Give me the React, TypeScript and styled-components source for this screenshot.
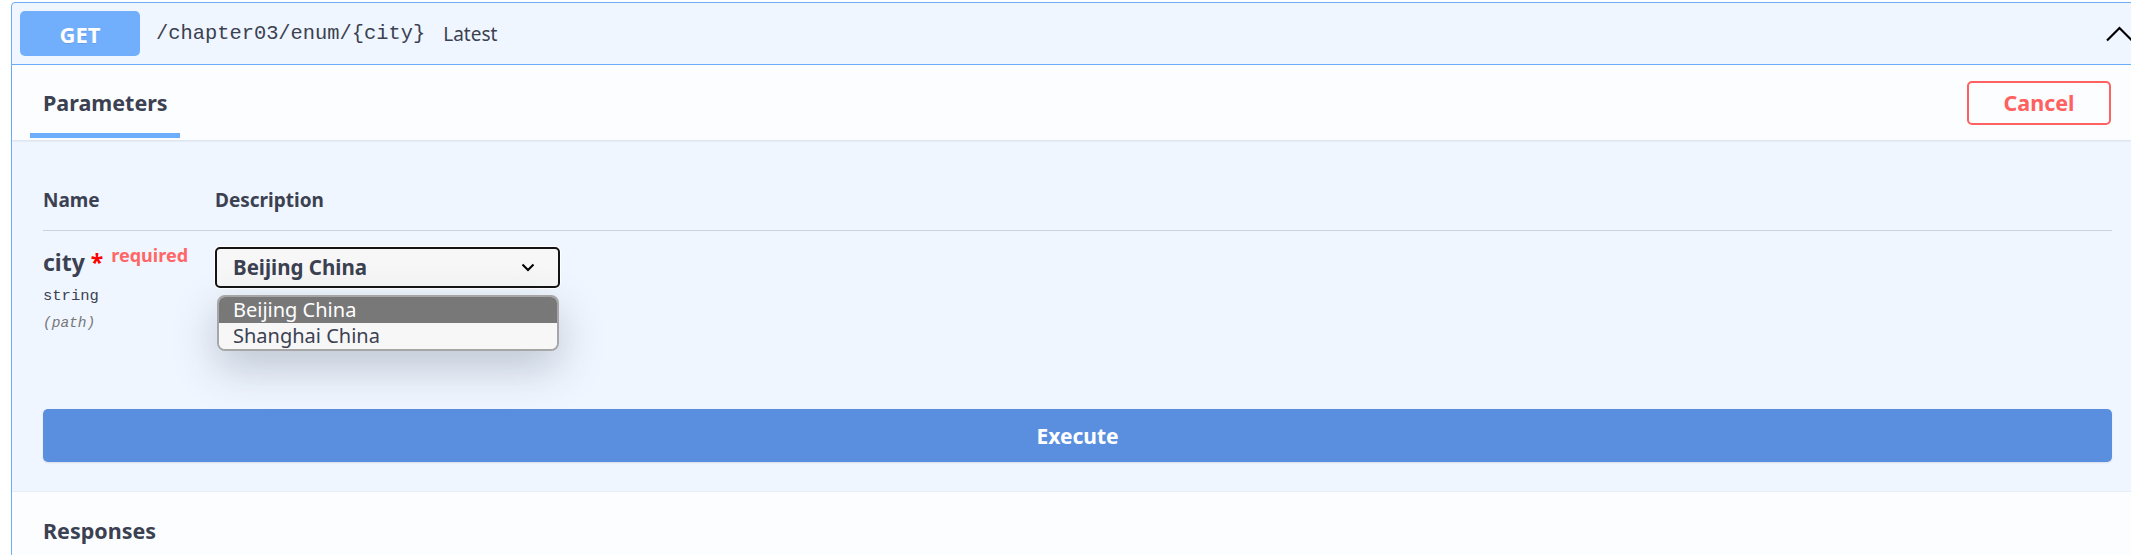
import styled, { createGlobalStyle } from 'styled-components'

const GlobalStyle = createGlobalStyle`
  body {
    margin: 0;
    overflow: hidden;
    background: #ffffff;
    font-family: "Noto Sans", "Open Sans", sans-serif;
    color: #3b4151;
  }
`;

const Page = styled.div`
  padding: 2px 0 0 11px;
`;

const OpBlock = styled.div`
  width: 2131px;
  border: 1px solid #6eadfc;
  border-radius: 4px;
  background: #eff6ff;
`;

const Summary = styled.div`
  display: flex;
  align-items: center;
  height: 61px;
  padding-left: 8px;
  border-bottom: 1px solid #6eadfc;
  box-sizing: content-box;
`;

const MethodBadge = styled.span`
  display: flex;
  align-items: center;
  justify-content: center;
  width: 120px;
  height: 45px;
  border-radius: 5px;
  background: #71aefc;
  color: #ffffff;
  font-size: 22px;
  font-weight: 700;
  text-shadow: 0 1px 0 rgba(0, 0, 0, 0.1);
`;

const PathText = styled.span`
  margin-left: 16px;
  font-family: "Liberation Mono", "DejaVu Sans Mono", monospace;
  font-size: 20.4px;
  color: #3b4151;
`;

const Summ = styled.span`
  margin-left: 18px;
  font-size: 19px;
  color: #3b4151;
`;

const Arrow = styled.svg`
  margin-left: auto;
  margin-right: 10px;
`;

const SectionHeader = styled.div`
  display: flex;
  align-items: center;
  justify-content: space-between;
  height: 75px;
  padding: 0 32px 0 18px;
  background: rgba(255, 255, 255, 0.8);
  box-shadow: 0 1px 2px rgba(0, 0, 0, 0.1);
`;

const Tab = styled.div`
  align-self: flex-end;
  margin-bottom: 2px;
  padding: 24px 12px 16px 13px;
  line-height: 28px;
  font-size: 21.5px;
  font-weight: 700;
  border-bottom: 5px solid #6eadfc;
`;

const CancelButton = styled.button`
  width: 144px;
  height: 44px;
  border: 2px solid #ff6060;
  border-radius: 5px;
  background: transparent;
  color: #ff6060;
  font-family: inherit;
  font-size: 21.5px;
  font-weight: 700;
  padding: 0;
`;

const Body = styled.div`
  padding: 47px 31px 30px 31px;
`;

const ParamTable = styled.div`
  display: grid;
  grid-template-columns: 172px 1fr;
`;

const HeadCell = styled.div`
  padding-bottom: 17px;
  border-bottom: 1px solid #c9d2df;
  line-height: 26px;
  font-size: 19px;
  font-weight: 700;
`;

const NameCell = styled.div`
  padding-top: 16px;
`;

const ParamName = styled.div`
  line-height: 30px;
  font-size: 23px;
  font-weight: 700;
  white-space: nowrap;
`;

const Star = styled.span`
  color: #ff0000;
`;

const Required = styled.span`
  padding-left: 8px;
  font-size: 18px;
  line-height: 0;
  color: #ff6666;
  vertical-align: 9px;
`;

const TypeLabel = styled.div`
  margin-top: 9px;
  line-height: 20px;
  font-family: "Liberation Mono", "DejaVu Sans Mono", monospace;
  font-size: 15.5px;
  color: #3b4151;
`;

const InLabel = styled.div`
  margin-top: 7px;
  line-height: 20px;
  font-family: "Liberation Mono", "DejaVu Sans Mono", monospace;
  font-size: 14.5px;
  font-style: italic;
  color: #777777;
`;

const DescCell = styled.div`
  padding-top: 16px;
`;

const SelectWrap = styled.div`
  position: relative;
  width: 345px;
`;

const SelectBox = styled.div`
  display: flex;
  align-items: center;
  justify-content: space-between;
  height: 41px;
  box-sizing: border-box;
  padding: 0 23px 0 16px;
  border: 2px solid #141414;
  border-radius: 5px;
  background: #f7f7f7;
  box-shadow: 0 0 0 1px #ffffff;
  font-size: 20.5px;
  font-weight: 700;
  line-height: 37px;
`;

const OptionList = styled.div`
  position: absolute;
  top: 48px;
  left: 2px;
  width: 342px;
  box-sizing: border-box;
  border: 2px solid #a6a6a6;
  border-radius: 8px;
  overflow: hidden;
  background: #f7f7f7;
  box-shadow: 0 16px 44px rgba(40, 50, 70, 0.25);
`;

const Option = styled.div<{ $active?: boolean }>`
  height: 26px;
  line-height: 26px;
  padding-left: 14px;
  font-size: 20px;
  background: ${(p) => (p.$active ? '#787878' : '#f7f7f7')};
  color: ${(p) => (p.$active ? '#ffffff' : '#3b4151')};
`;

const ExecuteButton = styled.button`
  display: block;
  width: 100%;
  height: 53px;
  margin-top: 76px;
  border: none;
  border-radius: 5px;
  background: #5a8fe0;
  color: #ffffff;
  font-family: inherit;
  font-size: 21px;
  font-weight: 700;
  box-shadow: 0 1px 2px rgba(0, 0, 0, 0.1);
`;

const Responses = styled.div`
  padding: 24px 31px 0;
  background: rgba(255, 255, 255, 0.8);
  box-shadow: 0 -1px 0 rgba(0, 0, 0, 0.03);
  height: 80px;
`;

const SectionTitle = styled.h4`
  margin: 0;
  line-height: 30px;
  font-size: 21.5px;
  font-weight: 700;
`;

const cities = ['Beijing China', 'Shanghai China']

export default function App() {
  return (
    <Page>
      <GlobalStyle />
      <OpBlock>
        <Summary>
          <MethodBadge>GET</MethodBadge>
          <PathText>/chapter03/enum/&#123;city&#125;</PathText>
          <Summ>Latest</Summ>
          <Arrow width="27" height="16" viewBox="0 0 27 16">
            <polyline points="1,14.5 13.5,2 26,14.5" fill="none" stroke="#000" strokeWidth="2.2" />
          </Arrow>
        </Summary>
        <SectionHeader>
          <Tab>Parameters</Tab>
          <CancelButton>Cancel</CancelButton>
        </SectionHeader>
        <Body>
          <ParamTable>
            <HeadCell>Name</HeadCell>
            <HeadCell>Description</HeadCell>
            <NameCell>
              <ParamName>
                city <Star>*</Star>
                <Required>required</Required>
              </ParamName>
              <TypeLabel>string</TypeLabel>
              <InLabel>(path)</InLabel>
            </NameCell>
            <DescCell>
              <SelectWrap>
                <SelectBox>
                  <span>Beijing China</span>
                  <svg width="14" height="9" viewBox="0 0 14 9">
                    <polyline points="1.5,1.5 7,7 12.5,1.5" fill="none" stroke="#000" strokeWidth="2" />
                  </svg>
                </SelectBox>
                <OptionList>
                  {cities.map((c, i) => (
                    <Option key={c} $active={i === 0}>{c}</Option>
                  ))}
                </OptionList>
              </SelectWrap>
            </DescCell>
          </ParamTable>
          <ExecuteButton>Execute</ExecuteButton>
        </Body>
        <Responses>
          <SectionTitle>Responses</SectionTitle>
        </Responses>
      </OpBlock>
    </Page>
  )
}
